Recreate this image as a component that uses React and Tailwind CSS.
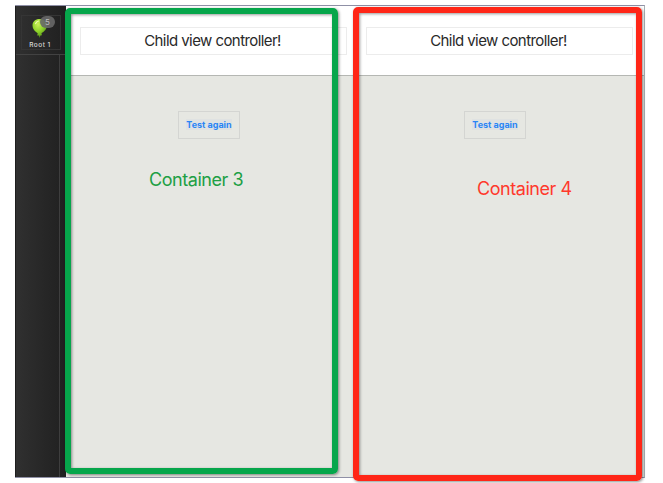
function BalloonIcon() {
  return (
    <svg width="18" height="22" viewBox="0 0 18 22" aria-hidden="true">
      <defs>
        <radialGradient id="balloon" cx="0.38" cy="0.28" r="0.75">
          <stop offset="0" stopColor="#cdf05a" />
          <stop offset="0.5" stopColor="#8fd32a" />
          <stop offset="1" stopColor="#4f8f14" />
        </radialGradient>
      </defs>
      <path
        d="M8.500 2C4.400 2 1.500 4.600 1.500 8.300c0 3.800 2.500 6.500 5.200 7.900l-.5 2.200 1.900.2.400 2.400.9-2.500 1.500-.3-.4-2.100C13.500 14.600 16 11.800 16 8.300 16 4.600 12.600 2 8.500 2z"
        fill="url(#balloon)"
      />
      <path d="M4.600 6.600Q5.500 4.400 7.600 4" stroke="#effbb0" strokeWidth="1.200" fill="none" strokeLinecap="round" />
    </svg>
  );
}

function Sidebar() {
  return (
    <aside className="flex w-[51px] shrink-0 flex-col border-l border-[#1e1e1e] bg-linear-to-r from-[#303030] to-[#202020]">
      <div className="flex h-[49px] flex-col items-center border-b border-[#424242] pt-[9px]">
        <div className="relative flex h-[35px] w-[40px] flex-col items-center border border-[#353535] pt-px">
          <div className="h-[22px] w-[18px] -ml-0.5">
            <BalloonIcon />
          </div>
          <span className="mt-[2px] -ml-0.5 whitespace-nowrap text-[6.5px] leading-[8px] font-medium tracking-[0.5px] text-[#d8d8d8]">
            Root 1
          </span>
          <span className="absolute top-0 left-[18px] flex h-[12px] w-[15px] items-center justify-center rounded-full bg-[#686868]/90 text-[8px] leading-none text-[#bebebe]">
            5
          </span>
        </div>
      </div>
      <div className="mr-[6px] flex-1 border-r border-[#3e3e3e]" />
    </aside>
  );
}

function ChildView() {
  return (
    <div className="flex flex-col">
      <header className="h-[70px] border-b border-[#b5b7b3] bg-white pt-[21px]">
        <div className="ml-[14px] flex h-[28px] w-[267px] items-center justify-center border border-[#ececec] pr-[2px] pb-[2px] text-[15px] leading-none tracking-[-0.57px] text-[#292929]">
          Child view controller!
        </div>
      </header>
      <div className="flex flex-1 items-start bg-[#e6e7e2] pt-[35px]">
        <button className="ml-[112px] flex h-[28px] w-[62px] items-center justify-center border border-[#d4d5d2] pb-[2px] text-[9px] font-bold leading-none text-[#2b86f5]">
          <span className="whitespace-nowrap bg-[#dfe2e2] py-[1px]">Test again</span>
        </button>
      </div>
    </div>
  );
}

export default function App() {
  return (
    <main className="relative h-[483px] w-[663px] overflow-hidden bg-white pt-[5px] pl-[15px] font-['Inter','Liberation_Sans',sans-serif]">
      <div className="flex h-[473px] w-[630px] border-t border-r border-b border-[#8f90a6] border-r-[#a9b1b4] bg-white">
        <Sidebar />
        <div className="grid w-[281px] shrink-0 border-r border-[#c9cbd2]">
          <ChildView />
        </div>
        <div className="flex w-[5px] shrink-0 flex-col">
          <div className="h-[70px] border-b border-[#b5b7b3] bg-white" />
          <div className="flex-1 bg-[#e6e7e2]" />
        </div>
        <div className="grid flex-1">
          <ChildView />
        </div>
      </div>

      <div className="absolute top-[8px] left-[65px] h-[466px] w-[273px] rounded-[5px] border-[6px] border-[#06a64b] shadow-[1px_1px_3px_rgba(0,0,0,0.45),inset_1px_1px_3px_rgba(0,0,0,0.4)]" />
      <div className="absolute top-[7px] left-[353px] h-[474px] w-[289px] rounded-[5px] border-[6px] border-[#ff2617] shadow-[1px_1px_3px_rgba(0,0,0,0.45),inset_1px_1px_3px_rgba(0,0,0,0.4)]" />
      <span className="absolute top-[168px] left-[149px] whitespace-nowrap text-[18px] leading-[24px] tracking-[-0.45px] text-[#209f44]">Container 3</span>
      <span className="absolute top-[177px] left-[477px] whitespace-nowrap text-[18px] leading-[24px] tracking-[-0.45px] text-[#ff392c]">Container 4</span>
    </main>
  );
}
